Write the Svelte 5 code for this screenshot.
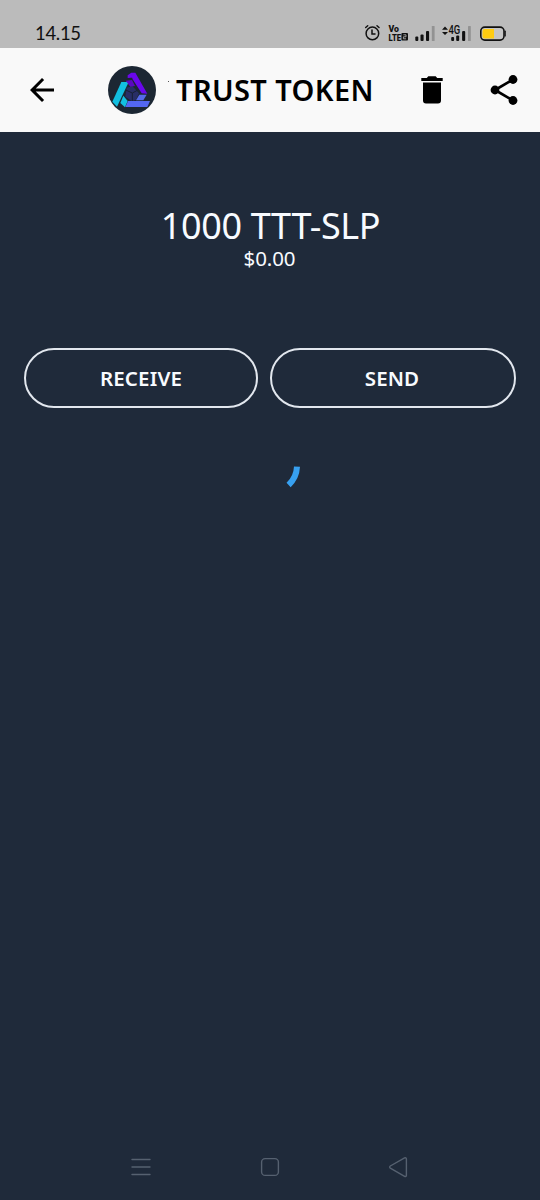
<script lang="ts">
  interface Token {
    name: string;
    symbol: string;
    balance: number;
    fiat: string;
  }

  let token: Token = $state({
    name: "TRUST TOKEN",
    symbol: "TTT-SLP",
    balance: 1000,
    fiat: "$0.00",
  });
  let loading = $state(true);
</script>

<div class="screen">
  <div class="status-bar">
    <span class="clock">14.15</span>
    <svg class="status-icons" width="144" height="24" viewBox="0 0 144 24" aria-hidden="true">
      <!-- alarm -->
      <g fill="none" stroke="#111" stroke-width="1.5" stroke-linecap="round">
        <circle cx="10.4" cy="12.4" r="6.3" />
        <path d="M10 9v4h3M3.7 6.5l2-1.7M17 6.5l-2-1.7" />
      </g>
      <text class="volte" x="26.5" y="11.3" textLength="10.5" lengthAdjust="spacingAndGlyphs">Vo</text>
      <text class="volte" x="26.5" y="19.6" textLength="12.5" lengthAdjust="spacingAndGlyphs">LTE</text>
      <rect x="39.4" y="12" width="6.6" height="7.6" rx="1" fill="#111" />
      <path d="M41.4 13.8H44v2h-2.6v2H44" fill="none" stroke="#bbb" stroke-width=".8" />
      <!-- first sim -->
      <g fill="#111">
        <rect x="53.3" y="15.5" width="3" height="4.5" rx="1" />
        <rect x="58.5" y="13.5" width="3.1" height="6.5" rx="1" />
        <rect x="64" y="10" width="3.1" height="10" rx="1" />
      </g>
      <rect x="69.8" y="5" width="2.8" height="15" rx=".6" fill="#929292" />
      <!-- second sim -->
      <path d="M80 8.8l3-3.2 3 3.2zM80 10.9l3 3.2 3-3.2z" fill="#111" />
      <text class="network" x="86.5" y="13.4" textLength="11.8" lengthAdjust="spacingAndGlyphs">4G</text>
      <g fill="#111">
        <rect x="89.2" y="16" width="2.9" height="4" rx="1" />
        <rect x="94.2" y="14.6" width="3" height="5.4" rx="1" />
        <rect x="100.1" y="10" width="3.1" height="10" rx="1" />
      </g>
      <rect x="106" y="5" width="2.8" height="15" rx=".6" fill="#929292" />
      <!-- battery -->
      <rect x="118.8" y="6.1" width="23.2" height="13" rx="4" fill="#c5c5c5" stroke="#111" stroke-width="1.6" />
      <path d="M122.5 8h9.5v9.4h-9.5a2 2 0 0 1-2-2V10a2 2 0 0 1 2-2z" fill="#fc1" />
      <path d="M143.2 10.2v4.8" stroke="#111" stroke-width="1.2" stroke-linecap="round" />
    </svg>
  </div>

  <header class="app-bar">
    <button class="icon-btn" aria-label="Back">
      <svg width="36" height="36" viewBox="0 0 24 24">
        <path d="M20 11H7.83l5.59-5.59L12 4l-8 8 8 8 1.41-1.41L7.83 13H20v-2z" />
      </svg>
    </button>
    <svg class="token-logo" width="48" height="48" viewBox="0 0 144 144" aria-hidden="true">
      <circle cx="72" cy="72" r="72" fill="#1c2733" />
      <path d="M56 65l17-5 20 22-9 19-12 5-20-14z" fill="#282e66" />
      <path d="M53 72l20 9 15-8M73 81v24" fill="none" stroke="#172033" stroke-width="3" />
      <path d="M40 48h22L27 122 13 107z" fill="#12bfe0" />
      <path d="M46 89l13 16-8 19-14-13z" fill="#12bfe0" />
      <path d="M59 28l11-8h12l36 63-17-1-30-47-12 1z" fill="#6a07ec" />
      <path d="M53 44l19-2 9 18-14 2z" fill="#5b08c0" />
      <path d="M57 38l16-1" stroke="#1c2733" stroke-width="3" />
      <path d="M94 86h22l-10 17H84z" fill="#5669e8" />
      <path d="M60 105h66l-8 18H52z" fill="#5367f1" />
    </svg>
    <span class="tick"></span>
    <h1 class="title">{token.name}</h1>
    <button class="icon-btn delete" aria-label="Delete token">
      <svg width="36" height="36" viewBox="0 0 36 36">
        <path d="M7.3 6.1h5.5l1.5-1.8h7.4l1.5 1.8h5.5v2.8H7.3zM9 10.5h18v17.9a3 3 0 0 1-3 3H12a3 3 0 0 1-3-3z" />
      </svg>
    </button>
    <button class="icon-btn share" aria-label="Share">
      <svg width="36" height="36" viewBox="0 0 36 36">
        <path d="M27 7.5L9 18l18 10.5" fill="none" stroke="#000" stroke-width="2.8" />
        <circle cx="27" cy="7.5" r="4.4" />
        <circle cx="9" cy="18" r="4.4" />
        <circle cx="27" cy="28.5" r="4.4" />
      </svg>
    </button>
  </header>

  <main>
    <section class="balance">
      <div class="amount">{token.balance} {token.symbol}</div>
      <div class="fiat">{token.fiat}</div>
    </section>

    <div class="actions">
      <button class="action-btn action-btn--receive">RECEIVE</button>
      <button class="action-btn action-btn--send">SEND</button>
    </div>

    {#if loading}
      <svg class="spinner" width="60" height="60" viewBox="0 0 60 60" role="img" aria-label="Loading">
        <path d="M57 30.6A27 27 0 0 1 48.6 49" />
      </svg>
    {/if}
  </main>

  <nav class="system-nav">
    <svg width="24" height="24" viewBox="0 0 24 24">
      <path d="M3 4.5h18M3 12h18M3 19.5h18" />
    </svg>
    <svg width="24" height="24" viewBox="0 0 24 24">
      <rect x="3.6" y="3.6" width="16.8" height="16.8" rx="3.5" />
    </svg>
    <svg width="24" height="24" viewBox="0 0 24 24">
      <path d="M17.6 2.9L3.3 11a1.3 1.3 0 0 0 0 2.2l14.3 8.2a1.2 1.2 0 0 0 1.8-1V3.9a1.2 1.2 0 0 0-1.8-1z" />
    </svg>
  </nav>
</div>

<style>
  :global(body) {
    margin: 0;
    background: #1f2a3a;
  }

  .screen {
    display: flex;
    flex-direction: column;
    height: 1200px;
    background: #1f2a3a;
    color: #f8fbff;
    font-family: "Noto Sans", sans-serif;
  }

  button {
    margin: 0;
    padding: 0;
    border: 0;
    background: none;
    color: inherit;
    font-family: inherit;
  }

  .status-bar {
    box-sizing: border-box;
    display: flex;
    justify-content: space-between;
    height: 48px;
    padding: 21px 34px 0 35px;
    background: #bbb;
  }

  .clock {
    color: #111;
    font-family: Lato, sans-serif;
    font-size: 18.5px;
    line-height: 24px;
    letter-spacing: -0.3px;
  }

  .volte,
  .network {
    fill: #111;
    font-family: Roboto, sans-serif;
    font-size: 9px;
    font-weight: 900;
  }

  .network {
    font-size: 12px;
    font-weight: 500;
  }

  .app-bar {
    box-sizing: border-box;
    display: flex;
    align-items: center;
    height: 84px;
    padding: 0 18px 0 24px;
    background: #f9f9f9;
    color: #000;
  }

  .icon-btn {
    width: 36px;
    height: 36px;
  }

  .icon-btn svg {
    display: block;
  }

  .token-logo {
    margin-left: 48px;
  }

  .tick {
    width: 1px;
    height: 1px;
    margin: 0 0 18px 12px;
    background: #555;
  }

  .title {
    flex: 1;
    margin: 0 0 0 7px;
    font-size: 29px;
    font-weight: 600;
    line-height: 40px;
    letter-spacing: 0.4px;
    white-space: nowrap;
  }

  .share {
    margin-left: 36px;
  }

  main {
    flex: 1;
    display: flex;
    flex-direction: column;
  }

  .balance {
    padding-top: 70px;
    text-align: center;
  }

  .amount {
    margin-top: 1px;
    padding-left: 1px;
    font-size: 36px;
    line-height: 45px;
    letter-spacing: -0.35px;
  }

  .fiat {
    padding-right: 1px;
    font-size: 20.5px;
    line-height: 20px;
    letter-spacing: -0.1px;
  }

  .actions {
    display: flex;
    gap: 12px;
    margin: 80px 24px 0;
  }

  .action-btn {
    box-sizing: border-box;
    height: 60px;
    padding-bottom: 1px;
    border: 2px solid #e2e7ee;
    border-radius: 30px;
    font-size: 20.5px;
    font-weight: 600;
    letter-spacing: 0.15px;
  }

  .action-btn--receive {
    width: 234px;
  }

  .action-btn--send {
    flex: 1;
    padding-right: 2px;
  }

  .spinner {
    align-self: center;
    margin-top: 28px;
    fill: none;
    stroke: #37a0f0;
    stroke-width: 6;
  }

  .system-nav {
    display: flex;
    justify-content: center;
    gap: 105px;
    padding-bottom: 21px;
  }

  .system-nav svg {
    fill: none;
    stroke: #566170;
    stroke-width: 1.4;
    stroke-linecap: round;
  }
</style>
